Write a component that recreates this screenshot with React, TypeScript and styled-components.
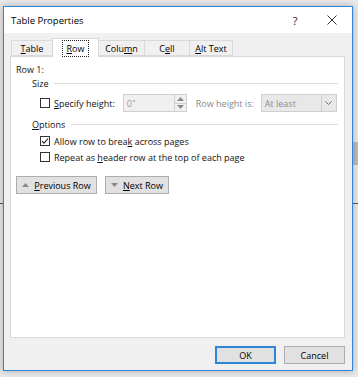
import React from 'react';
import styled, { createGlobalStyle } from 'styled-components';

const GlobalStyle = createGlobalStyle`
  html, body {
    margin: 0;
    padding: 0;
  }
  body {
    background: #e6e6e6;
    font-family: "Open Sans", "Noto Sans", "DejaVu Sans", sans-serif;
    font-size: 9px;
    color: #111;
  }
`;

// the Word window peeking out from behind the dialog
const Screen = styled.div`
  width: 358px;
  height: 377px;
  box-sizing: border-box;
  padding: 6px 0 0 3px;
  overflow: hidden;
  background:
    linear-gradient(#555, #555) 0 203px / 358px 1px no-repeat,
    linear-gradient(#bdbdbd, #bdbdbd) 352px 142px / 6px 23px no-repeat,
    linear-gradient(#e9e9e9, #e9e9e9);
`;

const Dialog = styled.div`
  width: 350px;
  height: 365px;
  box-sizing: border-box;
  border: 1px solid #2f86d6;
  background: #f0f0f0;
  box-shadow: 0 0 7px rgba(0, 0, 0, 0.28);
  display: flex;
  flex-direction: column;
`;

const TitleBar = styled.div`
  height: 26px;
  background: #fff;
  display: flex;
  align-items: center;
  padding-left: 7px;
`;

const Title = styled.div`
  flex: 1;
  font-size: 9.5px;
  color: #000;
`;

const TitleButton = styled.div<{ $w: number }>`
  width: ${p => p.$w}px;
  height: 26px;
  display: flex;
  align-items: center;
  justify-content: center;
  font-size: 11px;
  color: #222;
`;

const Body = styled.div`
  flex: 1;
  display: flex;
  flex-direction: column;
  padding: 5px 7px 6px 6px;
`;

const TabRow = styled.div`
  display: flex;
  align-items: flex-end;
  height: 18px;
  padding-left: 1px;
  position: relative;
  z-index: 1;
`;

const Tab = styled.div<{ $w: number; $active?: boolean }>`
  width: ${p => p.$w}px;
  height: ${p => (p.$active ? 19 : 16)}px;
  margin-bottom: ${p => (p.$active ? -1 : 0)}px;
  margin-left: -1px;
  box-sizing: border-box;
  border: 1px solid #d9d9d9;
  border-bottom: ${p => (p.$active ? 'none' : '1px solid #d9d9d9')};
  background: ${p => (p.$active ? '#fff' : '#f0f0f0')};
  display: flex;
  align-items: center;
  justify-content: center;
  padding-top: 1px;
  font-size: 9px;
  color: #000;
  &:first-child {
    margin-left: 0;
  }
`;

const FocusLabel = styled.span`
  outline: 1px dotted #222;
  outline-offset: 1px;
  padding: 0 3px;
`;

const Key = styled.span`
  text-decoration: underline;
  text-underline-offset: 1px;
`;

const Panel = styled.div`
  height: 282px;
  box-sizing: border-box;
  background: #fff;
  border: 1px solid #d9d9d9;
  padding: 5px 6px 0 5px;
  display: flex;
  flex-direction: column;
`;

const Line = styled.div<{ $indent?: number; $mt?: number; $h?: number }>`
  display: flex;
  align-items: center;
  height: ${p => p.$h ?? 14}px;
  margin-left: ${p => p.$indent ?? 0}px;
  margin-top: ${p => p.$mt ?? 0}px;
  white-space: nowrap;
`;

const Rule = styled.div`
  flex: 1;
  height: 1px;
  background: #dcdcdc;
  margin-left: 6px;
`;

const Box = styled.span`
  width: 10px;
  height: 10px;
  box-sizing: border-box;
  border: 1px solid #333;
  background: #fff;
  margin-right: 4px;
  display: inline-flex;
  align-items: center;
  justify-content: center;
  flex: none;
`;

const Muted = styled.span<{ $ml?: number }>`
  color: #888;
  margin-left: ${p => p.$ml ?? 0}px;
`;

const Spin = styled.div`
  width: 64px;
  height: 18px;
  box-sizing: border-box;
  border: 1px solid #cfcfcf;
  background: #f0f0f0;
  margin-left: 8px;
  display: flex;
  align-items: stretch;
`;

const SpinText = styled.div`
  flex: 1;
  color: #9a9a9a;
  padding-left: 3px;
  display: flex;
  align-items: center;
`;

const SpinButtons = styled.div`
  width: 11px;
  border-left: 1px solid #cfcfcf;
  display: flex;
  flex-direction: column;
`;

const SpinHalf = styled.div<{ $bottom?: boolean }>`
  flex: 1;
  display: flex;
  align-items: center;
  justify-content: center;
  border-top: ${p => (p.$bottom ? '1px solid #cfcfcf' : 'none')};
`;

const Select = styled.div`
  width: 76px;
  height: 18px;
  box-sizing: border-box;
  border: 1px solid #cfcfcf;
  background: #e8e8e8;
  margin-left: 7px;
  display: flex;
  align-items: stretch;
`;

const SelectText = styled.div`
  flex: 1;
  color: #8c8c8c;
  padding-left: 3px;
  display: flex;
  align-items: center;
`;

const SelectArrow = styled.div`
  width: 14px;
  border-left: 1px solid #cfcfcf;
  display: flex;
  align-items: center;
  justify-content: center;
`;

const NavRow = styled.div`
  display: flex;
  gap: 8px;
  margin-top: 12px;
`;

const Button = styled.div<{ $w: number; $primary?: boolean }>`
  width: ${p => p.$w}px;
  height: 18px;
  box-sizing: border-box;
  background: #e1e1e1;
  border: 1px solid ${p => (p.$primary ? '#2f86d6' : '#adadad')};
  box-shadow: ${p => (p.$primary ? 'inset 0 0 0 1px #2f86d6' : 'none')};
  display: flex;
  align-items: center;
  justify-content: center;
  gap: 5px;
  color: #000;
  font-size: 9px;
`;

const Footer = styled.div`
  display: flex;
  justify-content: flex-end;
  gap: 8px;
  margin-top: 8px;
`;

const Tri = ({ down }: { down?: boolean }) => (
  <svg width="7" height="4" viewBox="0 0 7 4">
    <path d={down ? 'M0 0h7L3.5 4z' : 'M0 4h7L3.5 0z'} fill="#8a8a8a" />
  </svg>
);

const Check = () => (
  <svg width="8" height="8" viewBox="0 0 8 8">
    <path d="M1 4.2l2 2L7 1.5" fill="none" stroke="#222" strokeWidth="1.1" />
  </svg>
);

export default function App() {
  return (
    <>
      <GlobalStyle />
      <Screen>
        <Dialog>
          <TitleBar>
            <Title>Table Properties</Title>
            <TitleButton $w={34}>?</TitleButton>
            <TitleButton $w={40}>
              <svg width="10" height="10" viewBox="0 0 10 10">
                <path d="M0.5 0.5l9 9M9.5 0.5l-9 9" stroke="#333" strokeWidth="1" />
              </svg>
            </TitleButton>
          </TitleBar>
          <Body>
            <TabRow>
              <Tab $w={42}><span><Key>T</Key>able</span></Tab>
              <Tab $w={47} $active><FocusLabel><Key>R</Key>ow</FocusLabel></Tab>
              <Tab $w={47}><span>Colu<Key>m</Key>n</span></Tab>
              <Tab $w={46}><span>C<Key>e</Key>ll</span></Tab>
              <Tab $w={44}><span><Key>A</Key>lt Text</span></Tab>
            </TabRow>
            <Panel>
              <Line>Row 1:</Line>
              <Line $indent={16}>
                Size
                <Rule />
              </Line>
              <Line $indent={24} $mt={4} $h={18}>
                <Box />
                <span><Key>S</Key>pecify height:</span>
                <Spin>
                  <SpinText>0"</SpinText>
                  <SpinButtons>
                    <SpinHalf><Tri /></SpinHalf>
                    <SpinHalf $bottom><Tri down /></SpinHalf>
                  </SpinButtons>
                </Spin>
                <Muted $ml={9}>Row height is:</Muted>
                <Select>
                  <SelectText>At least</SelectText>
                  <SelectArrow>
                    <svg width="7" height="4" viewBox="0 0 7 4">
                      <path d="M0.5 0.5l3 3 3-3" fill="none" stroke="#666" strokeWidth="1" />
                    </svg>
                  </SelectArrow>
                </Select>
              </Line>
              <Line $indent={16} $mt={5}>
                <span><Key>O</Key>ptions</span>
                <Rule />
              </Line>
              <Line $indent={24} $mt={3}>
                <Box><Check /></Box>
                <span>Allow row to brea<Key>k</Key> across pages</span>
              </Line>
              <Line $indent={24} $mt={2}>
                <Box />
                <span>Repeat as <Key>h</Key>eader row at the top of each page</span>
              </Line>
              <NavRow>
                <Button $w={81}>
                  <Tri />
                  <span><Key>P</Key>revious Row</span>
                </Button>
                <Button $w={64}>
                  <Tri down />
                  <span><Key>N</Key>ext Row</span>
                </Button>
              </NavRow>
            </Panel>
            <Footer>
              <Button $w={61} $primary>OK</Button>
              <Button $w={61}>Cancel</Button>
            </Footer>
          </Body>
        </Dialog>
      </Screen>
    </>
  );
}
